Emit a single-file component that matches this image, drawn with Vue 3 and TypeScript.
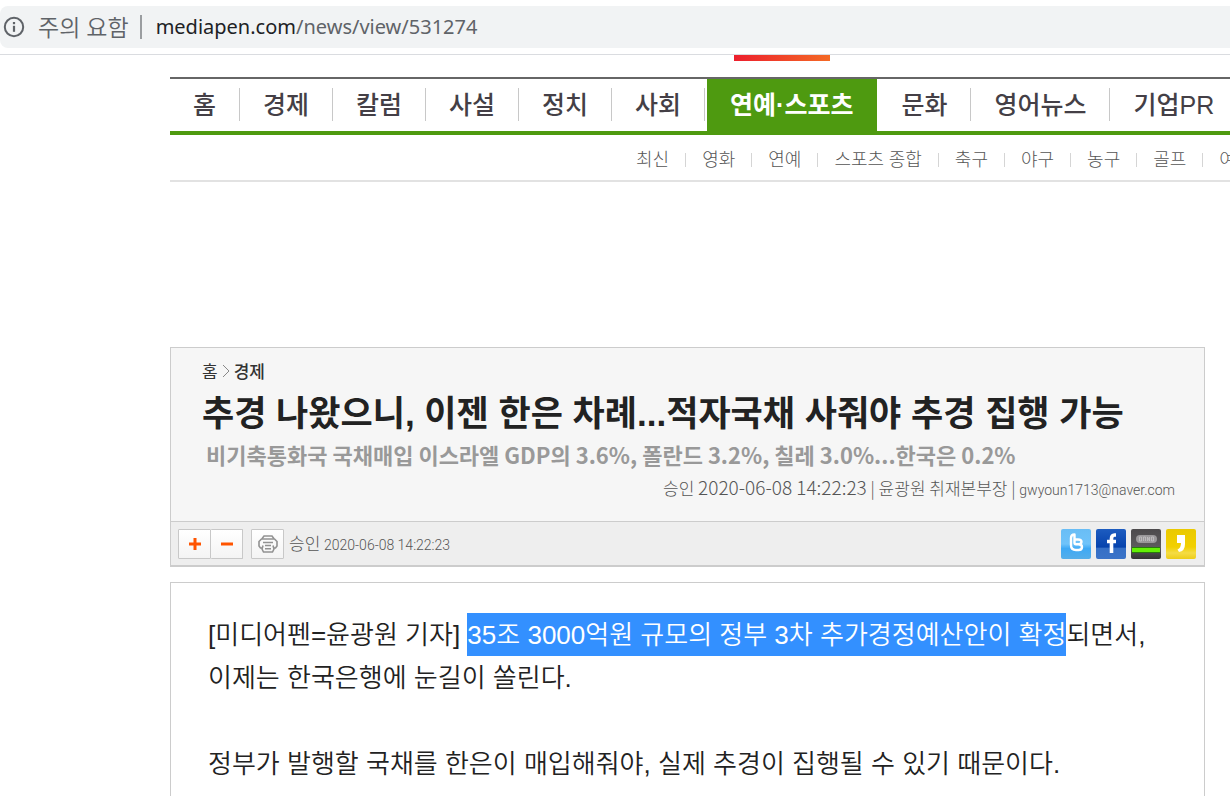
<script setup lang="ts">
interface NavItem {
  label: string
  active?: boolean
}

const sections: NavItem[] = [
  { label: '홈' },
  { label: '경제' },
  { label: '칼럼' },
  { label: '사설' },
  { label: '정치' },
  { label: '사회' },
  { label: '연예·스포츠', active: true },
  { label: '문화' },
  { label: '영어뉴스' },
  { label: '기업PR' },
]

const topics: string[] = ['최신', '영화', '연예', '스포츠 종합', '축구', '야구', '농구', '골프', '여행']
</script>

<template>
  <div class="page">
    <header class="browser">
      <div class="omnibox">
        <svg class="info" viewBox="0 0 22 22" aria-hidden="true">
          <circle cx="11" cy="11" r="9.2" fill="none" stroke="#5f6368" stroke-width="2" />
          <rect x="9.9" y="9.8" width="2.2" height="6" fill="#5f6368" />
          <rect x="9.9" y="6" width="2.2" height="2.2" fill="#5f6368" />
        </svg>
        <span class="warning">주의 요함</span>
        <span class="divider"></span>
        <span class="url"><b>mediapen.com</b>/news/view/531274</span>
      </div>
    </header>

    <div class="site">
      <div class="logo-strip"><span></span></div>
      <nav class="sections">
        <a v-for="item in sections" :key="item.label" href="#" :class="{ active: item.active }">{{ item.label }}</a>
      </nav>
      <nav class="topics">
        <a v-for="topic in topics" :key="topic" href="#">{{ topic }}</a>
      </nav>

      <main>
        <section class="heading">
          <div class="summary">
            <div class="crumbs">
              <a href="#">홈</a>
              <svg viewBox="0 0 8 14" aria-hidden="true"><path d="M1 1l6 6-6 6" fill="none" stroke="#888" /></svg>
              <a href="#" class="current">경제</a>
            </div>
            <h1>추경 나왔으니, 이젠 한은 차례...적자국채 사줘야 추경 집행 가능</h1>
            <h2>비기축통화국 국채매입 이스라엘 GDP의 3.6%, 폴란드 3.2%, 칠레 3.0%...한국은 0.2%</h2>
            <p class="byline">승인 <time>2020-06-08 14:22:23</time> | 윤광원 취재본부장 | <a href="#">gwyoun1713@naver.com</a></p>
          </div>
          <div class="toolbar">
            <div class="zoom">
              <button type="button" aria-label="글자 크게">
                <svg viewBox="0 0 14 14"><path d="M7 1v12M1 7h12" stroke="#ff5400" stroke-width="3" /></svg>
              </button>
              <button type="button" aria-label="글자 작게">
                <svg viewBox="0 0 14 14"><path d="M1 7h12" stroke="#ff5400" stroke-width="3" /></svg>
              </button>
            </div>
            <button type="button" class="print" aria-label="인쇄">
              <svg viewBox="0 0 20 18" fill="none" stroke="#929292" stroke-width="1.6">
                <path d="M4.5 4V3l1.500-2h8l1.500 2v1" />
                <path d="M4 13H2.500L1 11V6.500L3.500 4h13L19 6.500V11l-1.500 2H16" />
                <path d="M5 7.500h10M7 10.500h6" />
                <path d="M5 10.500L4 14l1.500 3h9l1.500-3-1-3.500M7 13.800h6" />
              </svg>
            </button>
            <span class="approved">승인 <time>2020-06-08 14:22:23</time></span>
            <div class="share">
              <a href="#" aria-label="Twitter">
                <svg viewBox="0 0 30 30">
                  <defs><linearGradient id="tw" x2="0" y2="1"><stop stop-color="#69bdf5" /><stop offset=".5" stop-color="#6fc3fa" /><stop offset=".65" stop-color="#3ea9f5" /><stop offset="1" stop-color="#55aee9" /></linearGradient></defs>
                  <rect width="30" height="30" rx="2" fill="url(#tw)" />
                  <path d="M13.500 5.500Q10 5.500 10 9v7q0 5 5 5h2.500q3.500 0 3.500-3 0-2.800-3.500-2.800H15M13.500 5.500v4q0 1 1.500 1h2q3.500 0 3.500 2.300 0 2.400-3 2.400M13.500 9.500v4q0 1.700 1.500 1.700" fill="none" stroke="#fff" stroke-width="2.400" stroke-linecap="round" stroke-linejoin="round" />
                </svg>
              </a>
              <a href="#" aria-label="Facebook">
                <svg viewBox="0 0 30 30">
                  <defs><linearGradient id="fb" x2="0" y2="1"><stop stop-color="#1d5cc0" /><stop offset=".6" stop-color="#0643ad" /><stop offset=".65" stop-color="#356fc6" /><stop offset="1" stop-color="#3b74c8" /></linearGradient></defs>
                  <rect width="30" height="30" rx="2" fill="url(#fb)" />
                  <path d="M20 6h-1.500Q15.500 6 15.500 9.500V24M11 12.500h9" fill="none" stroke="#fff" stroke-width="3.600" />
                </svg>
              </a>
              <a href="#" aria-label="Band">
                <svg viewBox="0 0 30 30">
                  <defs><linearGradient id="bd" x2="0" y2="1"><stop stop-color="#4c4a4c" /><stop offset=".6" stop-color="#5d5b5d" /><stop offset="1" stop-color="#343434" /></linearGradient></defs>
                  <rect width="30" height="30" rx="2" fill="url(#bd)" />
                  <rect x="5" y="6" width="21" height="8" rx="4" fill="#9a989a" />
                  <path d="M8.500 8v4h2V8zM12.500 12V8h2v4M16.500 12V8l2 4V8M20.500 8v4h2V8z" fill="none" stroke="#c4c2c4" stroke-width=".8" />
                  <rect x="1" y="18" width="28" height="6" fill="#2a7a0c" />
                  <rect x="1" y="19" width="28" height="4" fill="#64f006" />
                </svg>
              </a>
              <a href="#" aria-label="KakaoStory">
                <svg viewBox="0 0 30 30">
                  <defs><linearGradient id="ks" x2="0" y2="1"><stop stop-color="#eac900" /><stop offset=".6" stop-color="#f2d000" /><stop offset=".8" stop-color="#f5dc45" /><stop offset="1" stop-color="#edcd18" /></linearGradient></defs>
                  <rect width="30" height="30" rx="2" fill="url(#ks)" />
                  <path d="M11 6h8v9q0 7-6 8l-1.500-2.500Q15 19 15 14h-4z" fill="#fff" />
                </svg>
              </a>
            </div>
          </div>
        </section>

        <article>
          <p>[미디어펜=윤광원 기자] <mark>35조 3000억원 규모의 정부 3차 추가경정예산안이 확정</mark>되면서, <br />이제는 한국은행에 눈길이 쏠린다.</p>
          <p>정부가 발행할 국채를 한은이 매입해줘야, 실제 추경이 집행될 수 있기 때문이다.</p>
        </article>
      </main>
    </div>
  </div>
</template>

<style>
body {
  overflow: hidden;
  background: #fff;
}
</style>

<style scoped>
.page {
  height: 100vh;
  overflow: hidden;
  font-family: 'Liberation Sans', 'Noto Sans CJK KR', sans-serif;
  color: #222;
}
a {
  color: inherit;
  text-decoration: none;
}
svg {
  display: block;
}
.browser {
  padding: 6px 0;
  border-bottom: 1px solid #dadce0;
}
.omnibox {
  display: flex;
  align-items: center;
  height: 42px;
  padding-left: 3px;
  background: #f1f3f4;
  border-radius: 8px 0 0 8px;
  color: #5f6368;
  white-space: nowrap;
}
.info {
  width: 22px;
  height: 22px;
  margin-right: 13px;
}
.warning {
  font: 350 23px/40px 'Open Sans', 'Noto Sans CJK KR', sans-serif;
}
.divider {
  width: 2px;
  height: 24px;
  margin: 0 14px 0 11px;
  background: #9a9da0;
}
.url {
  font: 20px/42px 'Noto Sans', sans-serif;
}
.url b {
  font-weight: 400;
  color: #202124;
}
.site {
  padding-left: 170px;
}
.logo-strip {
  height: 22px;
}
.logo-strip span {
  display: block;
  width: 96px;
  height: 6px;
  margin-left: 564px;
  background: linear-gradient(90deg, #ec1f2d, #f46a25);
}
.sections {
  display: flex;
  height: 52px;
  overflow: hidden;
  border-top: 2px solid #666;
  border-bottom: 4px solid #4e9a10;
  font: 500 25px/52px 'Liberation Sans', 'Noto Sans CJK KR', sans-serif;
  color: #443f46;
  white-space: nowrap;
}
.sections a {
  flex: none;
  padding: 0 23px;
  background: linear-gradient(#c8c8c8, #c8c8c8) right 9px / 1px 33px no-repeat;
  border-right: 1px solid transparent;
  background-origin: border-box;
}
.sections .active {
  margin: 0 1px 0 2px;
  background: #4e9a10;
  color: #fff;
  font-weight: 700;
}
.topics {
  display: flex;
  align-items: center;
  height: 43px;
  padding: 2px 0 0 450px;
  overflow: hidden;
  border-bottom: 2px solid #e2e2e2;
  font: 300 18px/28px 'Open Sans', 'Noto Sans CJK KR', sans-serif;
  color: #555;
  white-space: nowrap;
}
.topics a {
  flex: none;
  padding: 0 16px;
  background: linear-gradient(#d5d5d5, #d5d5d5) right 8px / 1px 14px no-repeat;
  border-right: 1px solid transparent;
  background-origin: border-box;
}
main {
  margin: 165px 25px 0 0;
}
.heading {
  border: 1px solid #ccc;
  border-bottom-width: 2px;
  background: #f6f6f6;
}
.summary {
  padding: 11px 29px 17px 31px;
}
.crumbs {
  display: flex;
  align-items: center;
  gap: 4px;
  font: 17px/24px 'Noto Sans CJK KR', sans-serif;
  color: #333;
}
.crumbs svg {
  width: 8px;
  height: 14px;
}
.crumbs .current {
  font-weight: 500;
}
h1 {
  margin: 6px 0 0;
  font: 700 35px/50px 'Liberation Sans', 'Noto Sans CJK KR', sans-serif;
  white-space: nowrap;
}
h2 {
  margin: 0 0 0 4px;
  font: 700 22px/30px 'Noto Sans CJK KR', sans-serif;
  color: #999;
  white-space: nowrap;
}
.byline {
  margin: 4px 0 0;
  font: 300 17px/28px 'Noto Sans CJK KR', sans-serif;
  color: #555;
  text-align: right;
}
.byline time {
  font-size: 19px;
}
.byline a {
  font-family: Roboto, sans-serif;
  font-size: 14px;
}
.toolbar {
  display: flex;
  align-items: center;
  height: 43px;
  padding: 0 8px 0 7px;
  border-top: 1px solid #ccc;
  background: #eee;
}
button {
  display: flex;
  align-items: center;
  justify-content: center;
  width: 33px;
  height: 30px;
  padding: 0;
  border: 1px solid #c8c8c8;
  border-radius: 1px;
  background: linear-gradient(#fff, #f4f4f4);
}
.zoom {
  display: flex;
  margin-right: 8px;
}
.zoom button + button {
  width: 32px;
  border-left: 0;
}
.zoom svg {
  width: 14px;
  height: 14px;
}
.print svg {
  width: 20px;
  height: 18px;
}
.approved {
  margin-left: 5px;
  font: 300 17px/28px 'Noto Sans CJK KR', sans-serif;
  color: #555;
}
.approved time {
  font-family: Roboto, sans-serif;
  font-size: 14px;
}
.share {
  display: flex;
  gap: 5px;
  margin-left: auto;
}
.share svg {
  width: 30px;
  height: 30px;
}
article {
  height: 400px;
  margin-top: 15px;
  padding: 31px 37px;
  border: 1px solid #ccc;
  font-size: 26px;
  font-weight: 350;
  line-height: 43px;
}
article p {
  margin: 0 0 43px;
}
mark {
  padding: 7px 0 6px;
  background: #3390ff;
  color: #fff;
}
</style>
